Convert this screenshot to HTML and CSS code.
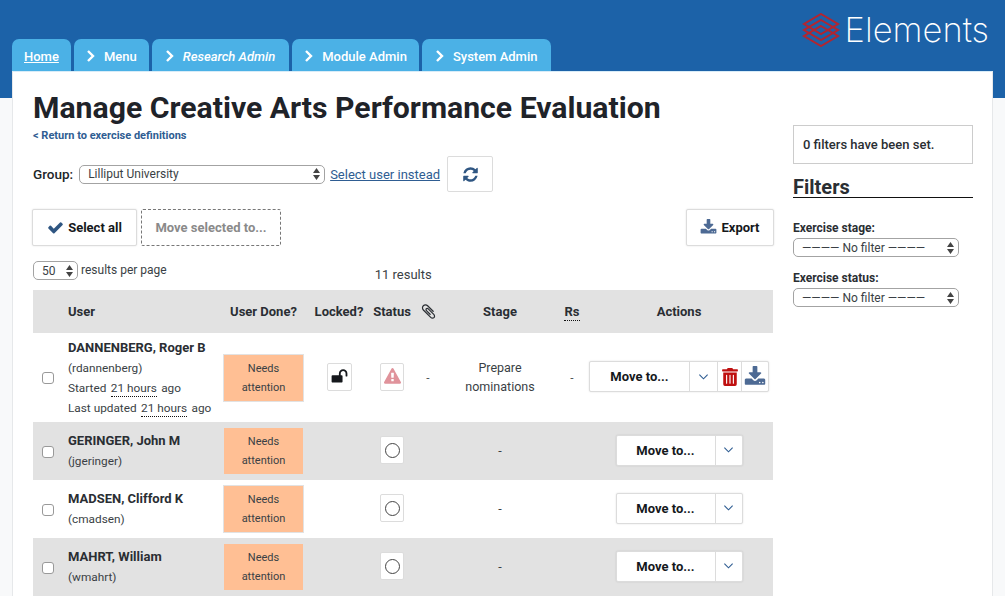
FILE: index.html
```html
<!DOCTYPE html>
<html lang="en">
<head>
<meta charset="utf-8">
<title>Manage Creative Arts Performance Evaluation</title>
<link rel="stylesheet" href="styles.css">
</head>
<body>
<header class="topbar">
  <nav class="tabs">
    <a class="tab tab-home">Home</a>
    <a class="tab"><svg class="chev" viewBox="0 0 10 14"><path d="M2 2l5 5-5 5"/></svg>Menu</a>
    <a class="tab tab-em"><svg class="chev" viewBox="0 0 10 14"><path d="M2 2l5 5-5 5"/></svg>Research Admin</a>
    <a class="tab"><svg class="chev" viewBox="0 0 10 14"><path d="M2 2l5 5-5 5"/></svg>Module Admin</a>
    <a class="tab tab-last"><svg class="chev" viewBox="0 0 10 14"><path d="M2 2l5 5-5 5"/></svg>System Admin</a>
  </nav>
  <div class="brand">
    <svg class="brand-mark" viewBox="0 0 38 34">
      <path d="M19 1L36 11 19 21 2 11z"/><path d="M19 7L36 17 19 27 2 17z"/><path d="M19 13L36 23 19 33 2 23z"/>
    </svg>
    <span class="brand-name">Elements</span>
  </div>
</header>
<main class="sheet">
  <section class="content">
    <h1 class="title">Manage Creative Arts Performance Evaluation</h1>
    <a class="back">&lt; Return to exercise definitions</a>
    <div class="group-row">
      <label class="group-label">Group:</label>
      <span class="sel sel-group"><select><option>Lilliput University</option></select><svg class="updown" viewBox="0 0 7 12"><path d="M3.5 0L7 5H0zM3.5 12L0 7h7z"/></svg></span>
      <a class="link">Select user instead</a>
      <button class="btn btn-refresh"><svg class="ico-refresh" viewBox="0 0 1792 1792"><path d="M1639 1056q0 5-1 7-64 268-268 434.5t-478 166.5q-146 0-282.5-55t-243.5-157l-129 129q-19 19-45 19t-45-19-19-45v-448q0-26 19-45t45-19h448q26 0 45 19t19 45-19 45l-137 137q71 66 161 102t187 36q134 0 250-65t186-179q11-17 53-117 8-23 30-23h192q13 0 22.5 9.5t9.5 22.5zm25-800v448q0 26-19 45t-45 19h-448q-26 0-45-19t-19-45 19-45l138-138q-148-137-349-137-134 0-250 65t-186 179q-11 17-53 117-8 23-30 23h-199q-13 0-22.5-9.5t-9.5-22.5v-7q65-268 270-434.5t480-166.5q146 0 284 55.5t245 156.5l130-129q19-19 45-19t45 19 19 45z"/></svg></button>
    </div>
    <div class="toolbar">
      <button class="btn btn-select"><svg class="ico-check" viewBox="0 0 1792 1792"><path d="M1671 566q0 40-28 68l-724 724-136 136q-28 28-68 28t-68-28l-136-136-362-362q-28-28-28-68t28-68l136-136q28-28 68-28t68 28l294 295 656-657q28-28 68-28t68 28l136 136q28 28 28 68z"/></svg>Select all</button>
      <button class="btn btn-move">Move selected to...</button>
      <button class="btn btn-export"><svg class="ico-dl" viewBox="0 0 1792 1792"><path d="M1344 1344q0-26-19-45t-45-19-45 19-19 45 19 45 45 19 45-19 19-45zm256 0q0-26-19-45t-45-19-45 19-19 45 19 45 45 19 45-19 19-45zm128-224v320q0 40-28 68t-68 28h-1472q-40 0-68-28t-28-68v-320q0-40 28-68t68-28h465l135 136q58 56 136 56t136-56l136-136h464q40 0 68 28t28 68zm-325-569q17 41-14 70l-448 448q-18 19-45 19t-45-19l-448-448q-31-29-14-70 17-39 59-39h256v-448q0-26 19-45t45-19h256q26 0 45 19t19 45v448h256q42 0 59 39z"/></svg>Export</button>
    </div>
    <div class="paging">
      <span class="sel sel-page"><select><option>50</option></select><svg class="updown" viewBox="0 0 7 12"><path d="M3.5 0L7 5H0zM3.5 12L0 7h7z"/></svg></span>
      <span class="per-page">results per page</span>
      <span class="count">11 results</span>
    </div>
    <table class="grid">
      <colgroup>
        <col class="c-check"><col class="c-user"><col class="c-done"><col class="c-lock"><col class="c-status"><col class="c-clip"><col class="c-stage"><col class="c-rs"><col class="c-actions">
      </colgroup>
      <thead>
        <tr>
          <th></th>
          <th class="left">User</th>
          <th>User Done?</th>
          <th>Locked?</th>
          <th>Status</th>
          <th><svg class="ico-clip" viewBox="0 0 1792 1792"><path d="M1596 1385q0 117-79 196t-196 79q-135 0-235-100l-777-776q-113-115-113-271 0-159 110-270t269-111q158 0 273 113l605 606q10 10 10 22 0 16-30.5 46.5t-46.5 30.5q-13 0-23-10l-606-607q-79-77-181-77-106 0-179 75t-73 181q0 105 76 181l776 777q63 63 145 63 64 0 106-42t42-106q0-82-63-145l-581-581q-26-24-60-24-29 0-48 19t-19 48q0 32 25 59l410 410q10 10 10 22 0 16-31 47t-47 31q-12 0-22-10l-410-410q-63-61-63-149 0-82 57-139t139-57q88 0 149 63l581 581q100 98 100 235z"/></svg></th>
          <th>Stage</th>
          <th><abbr class="dotted">Rs</abbr></th>
          <th>Actions</th>
        </tr>
      </thead>
      <tbody>
        <tr class="row-first">
          <td class="cell-check"><input type="checkbox" class="check"></td>
          <td class="left user"><b>DANNENBERG, Roger B</b><br>(rdannenberg)<br>Started <span class="dotted">21 hours</span> ago<br>Last updated <span class="dotted">21 hours</span> ago</td>
          <td><div class="badge">Needs<br>attention</div></td>
          <td><span class="mini mini-lock"><svg class="ico-lock" viewBox="0 0 1792 1792"><path d="M1728 576v256q0 26-19 45t-45 19h-64q-26 0-45-19t-19-45v-256q0-106-75-181t-181-75-181 75-75 181v192h96q40 0 68 28t28 68v576q0 40-28 68t-68 28h-960q-40 0-68-28t-28-68v-576q0-40 28-68t68-28h672v-192q0-185 131.5-316.5t316.5-131.5 316.5 131.5 131.5 316.5z"/></svg></span></td>
          <td><span class="mini"><svg class="ico-warn" viewBox="0 0 1792 1792"><path d="M1024 1375v-190q0-14-9.5-23.5t-22.5-9.5h-192q-13 0-22.5 9.5t-9.5 23.5v190q0 14 9.5 23.5t22.5 9.5h192q13 0 22.5-9.5t9.5-23.5zm-2-374l18-459q0-12-10-19-13-11-24-11h-220q-11 0-24 11-10 7-10 21l17 457q0 10 10 16.5t24 6.5h185q14 0 23.5-6.5t10.5-16.5zm-14-934l768 1408q35 63-2 126-17 29-46.5 46t-63.5 17h-1536q-34 0-63.5-17t-46.5-46q-37-63-2-126l768-1408q17-31 47-49t65-18 65 18 47 49z"/></svg></span></td>
          <td>-</td>
          <td class="stage">Prepare<br>nominations</td>
          <td>-</td>
          <td>
            <div class="act">
              <button class="act-main act-wide">Move to...</button>
              <button class="act-cell act-caret act-caret-wide"><svg class="caret" viewBox="0 0 12 8"><path d="M1.5 1.5L6 6l4.5-4.5"/></svg></button>
              <button class="act-cell act-ico"><svg class="ico-trash" viewBox="0 0 448 512"><path d="M32 464a48 48 0 0 0 48 48h288a48 48 0 0 0 48-48V128H32zm272-256a16 16 0 0 1 32 0v224a16 16 0 0 1-32 0zm-96 0a16 16 0 0 1 32 0v224a16 16 0 0 1-32 0zm-96 0a16 16 0 0 1 32 0v224a16 16 0 0 1-32 0zM432 32H312l-9.4-18.7A24 24 0 0 0 281.1 0H166.8a23.72 23.72 0 0 0-21.4 13.3L136 32H16A16 16 0 0 0 0 48v32a16 16 0 0 0 16 16h416a16 16 0 0 0 16-16V48a16 16 0 0 0-16-16z"/></svg></button>
              <button class="act-cell act-ico"><svg class="ico-dl-row" viewBox="0 0 1792 1792"><path d="M1344 1344q0-26-19-45t-45-19-45 19-19 45 19 45 45 19 45-19 19-45zm256 0q0-26-19-45t-45-19-45 19-19 45 19 45 45 19 45-19 19-45zm128-224v320q0 40-28 68t-68 28h-1472q-40 0-68-28t-28-68v-320q0-40 28-68t68-28h465l135 136q58 56 136 56t136-56l136-136h464q40 0 68 28t28 68zm-325-569q17 41-14 70l-448 448q-18 19-45 19t-45-19l-448-448q-31-29-14-70 17-39 59-39h256v-448q0-26 19-45t45-19h256q26 0 45 19t19 45v448h256q42 0 59 39z"/></svg></button>
            </div>
          </td>
        </tr>
        <tr class="row-alt">
          <td class="cell-check"><input type="checkbox" class="check"></td>
          <td class="left user"><b>GERINGER, John M</b><br>(jgeringer)</td>
          <td><div class="badge">Needs<br>attention</div></td>
          <td></td>
          <td><span class="mini"><i class="ring"></i></span></td>
          <td></td>
          <td class="stage">-</td>
          <td></td>
          <td><div class="act"><button class="act-main">Move to...</button><button class="act-cell act-caret"><svg class="caret" viewBox="0 0 12 8"><path d="M1.5 1.5L6 6l4.5-4.5"/></svg></button></div></td>
        </tr>
        <tr>
          <td class="cell-check"><input type="checkbox" class="check"></td>
          <td class="left user"><b>MADSEN, Clifford K</b><br>(cmadsen)</td>
          <td><div class="badge">Needs<br>attention</div></td>
          <td></td>
          <td><span class="mini"><i class="ring"></i></span></td>
          <td></td>
          <td class="stage">-</td>
          <td></td>
          <td><div class="act"><button class="act-main">Move to...</button><button class="act-cell act-caret"><svg class="caret" viewBox="0 0 12 8"><path d="M1.5 1.5L6 6l4.5-4.5"/></svg></button></div></td>
        </tr>
        <tr class="row-alt">
          <td class="cell-check"><input type="checkbox" class="check"></td>
          <td class="left user"><b>MAHRT, William</b><br>(wmahrt)</td>
          <td><div class="badge">Needs<br>attention</div></td>
          <td></td>
          <td><span class="mini"><i class="ring"></i></span></td>
          <td></td>
          <td class="stage">-</td>
          <td></td>
          <td><div class="act"><button class="act-main">Move to...</button><button class="act-cell act-caret"><svg class="caret" viewBox="0 0 12 8"><path d="M1.5 1.5L6 6l4.5-4.5"/></svg></button></div></td>
        </tr>
      </tbody>
    </table>
  </section>
  <aside class="side">
    <div class="filter-note">0 filters have been set.</div>
    <h2 class="filters-title">Filters</h2>
    <label class="filter-label">Exercise stage:</label>
    <span class="sel sel-filter"><select><option>———— No filter ————</option></select><svg class="updown" viewBox="0 0 7 12"><path d="M3.5 0L7 5H0zM3.5 12L0 7h7z"/></svg></span>
    <label class="filter-label filter-label-2">Exercise status:</label>
    <span class="sel sel-filter"><select><option>———— No filter ————</option></select><svg class="updown" viewBox="0 0 7 12"><path d="M3.5 0L7 5H0zM3.5 12L0 7h7z"/></svg></span>
  </aside>
</main>
</body>
</html>
```
FILE: styles.css
```css
* { box-sizing: border-box; }
html, body { margin: 0; height: 596px; overflow: hidden; }
body {
  font-family: Roboto, "Liberation Sans", sans-serif;
  color: #212529;
  background: linear-gradient(#1c62a8 98px, #f8f9fa 98px);
}
.topbar {
  height: 71px;
  padding: 0 16px 0 12px;
  display: flex;
  justify-content: space-between;
}
.tabs { display: flex; gap: 3px; align-items: flex-end; }
.tab {
  height: 32px;
  padding: 2px 12px 0;
  display: flex;
  align-items: center;
  background: #4bb1e6;
  color: #fff;
  font-size: 13px;
  font-weight: 500;
  border-radius: 7px 7px 0 0;
}
.tab-home { text-decoration: underline; }
.tab-em { font-style: italic; padding: 2px 14px 0 13px; }
.tab-last { padding: 2px 13px 0; }
.chev { width: 10px; height: 14px; margin-right: 8px; fill: none; stroke: #fff; stroke-width: 2.4; }
.brand { display: flex; align-items: flex-start; padding-top: 11px; gap: 5px; }
.brand-mark { width: 38px; height: 34px; margin-top: 2px; fill: none; stroke: #b3252f; stroke-width: 2; }
.brand-name { font-family: Inter, sans-serif; font-weight: 250; font-size: 34.5px; line-height: 38px; color: #fff; }

.sheet {
  margin: 0 12px;
  height: 525px;
  background: #fff;
  border-left: 1px solid #e6e8ea;
  border-right: 1px solid #e6e8ea;
  border-top: 1px solid #d8ecf8;
  padding: 0 19px 0 20px;
  display: flex;
  gap: 19px;
  overflow: hidden;
}
.content { width: 741px; flex: none; }
.side { width: 180px; flex: none; padding-top: 53px; }

.title { margin: 18px 0 0; font-size: 30.2px; line-height: 36px; font-weight: 700; color: #1f2329; white-space: nowrap; }
.back { display: block; margin-top: 3px; font-size: 11px; line-height: 14px; font-weight: 700; color: #2f5d92; }

.group-row { display: flex; align-items: center; margin-top: 13px; height: 36px; }
.group-label { font-size: 13.5px; font-weight: 500; margin-right: 6px; }
.sel { display: inline-block; position: relative; }
.sel select {
  appearance: none;
  display: block;
  width: 100%;
  height: 100%;
  background: #fff;
  border: 1px solid #a3a3a3;
  border-radius: 5px;
  font-family: Roboto, sans-serif;
  font-size: 12px;
  color: #3a3f45;
  padding: 0 0 0 8px;
}
.updown { position: absolute; right: 5px; top: 50%; margin-top: -6px; width: 7px; height: 12px; fill: #444; }
.sel-group { width: 246px; height: 19px; }
.link { margin-left: 5px; font-size: 13px; color: #2f5d92; text-decoration: underline; }
.btn {
  background: #fff;
  border: 1px solid #dcdcdc;
  border-radius: 2px;
  font-family: Roboto, sans-serif;
  font-size: 13px;
  font-weight: 700;
  color: #15181c;
  display: inline-flex;
  align-items: center;
  justify-content: center;
  padding: 0;
  box-shadow: 0 0 2px rgba(0,0,0,.12);
}
.btn-refresh { width: 46px; height: 36px; margin-left: 7px; box-shadow: none; }
.ico-refresh { width: 17px; height: 17px; fill: #2f5682; }

.toolbar { display: flex; margin-top: 17px; height: 37px; }
.btn-select { width: 105px; margin-left: -1px; }
.ico-check { width: 17px; height: 17px; fill: #2f5682; margin-right: 4px; }
.btn-move { width: 140px; margin-left: 4px; border: 1px dashed #777; color: #8a8a8a; box-shadow: none; }
.btn-export { width: 88px; margin-left: auto; }
.ico-dl { width: 17px; height: 17px; fill: #4d6a94; margin-right: 4px; }

.paging { display: flex; height: 44px; padding-top: 15px; font-size: 12px; }
.sel-page { width: 45px; height: 19px; }
.sel-page select { padding-left: 8px; }
.per-page { margin-left: 3px; line-height: 18px; color: #3a3f45; }
.count { margin-left: 208px; margin-top: 5px; line-height: 18px; font-size: 13px; color: #3a3f45; }

.grid { width: 740px; border-collapse: collapse; table-layout: fixed; font-size: 11.8px; color: #3a3f45; }
.c-check { width: 27px; } .c-user { width: 158px; } .c-done { width: 91px; } .c-lock { width: 60px; }
.c-status { width: 46px; } .c-clip { width: 26px; } .c-stage { width: 118px; } .c-rs { width: 26px; } .c-actions { width: 188px; }
.grid thead tr { height: 43px; background: #e2e2e2; }
.grid th { font-size: 13px; font-weight: 700; color: #2a2e33; text-align: center; padding: 0; white-space: nowrap; }
.grid td { text-align: center; padding: 0; vertical-align: middle; }
.grid .left { text-align: left; padding-left: 8px; }
.grid .cell-check { padding-left: 3px; }
.grid tbody tr { height: 58px; }
.grid .row-first { height: 89px; }
.row-alt { background: #e2e2e2; }
.user { line-height: 20px; white-space: nowrap; }
.user b { font-size: 13px; font-weight: 700; color: #2a2e33; }
.dotted { border-bottom: 1px dotted #111; text-decoration: none; padding-bottom: 1px; margin: 0 1.5px; }
.grid .stage { font-size: 12.5px; line-height: 19px; padding-bottom: 2px; }
.check { appearance: none; width: 12px; height: 12px; margin: 0; border: 1px solid #999; border-radius: 3px; background: #fff; display: inline-block; vertical-align: middle; }
.badge {
  width: 81px;
  height: 48px;
  margin: 0 auto;
  background: #ffbf94;
  border: 1px solid #e2e2e2;
  font-size: 11px;
  line-height: 19px;
  padding-top: 4px;
  text-align: center;
}
.mini { width: 24px; height: 28px; margin-bottom: 2px; display: inline-flex; align-items: center; justify-content: center; background: #fff; border: 1px solid #dcdcdc; border-radius: 2px; vertical-align: middle; }
.mini-lock { width: 25px; }
.ico-lock { width: 17px; height: 17px; fill: #15181c; }
.ico-warn { width: 17px; height: 17px; fill: #e0939b; }
.ring { width: 15px; height: 15px; border: 1px solid #444; border-radius: 50%; display: block; }
.ico-clip { width: 17px; height: 17px; fill: #2a2e33; vertical-align: middle; }

.act { display: inline-flex; height: 31px; margin-bottom: 2px; background: #fff; border: 1px solid #dcdcdc; border-radius: 2px; box-shadow: 0 0 2px rgba(0,0,0,.12); vertical-align: middle; }
.act button { background: none; border: 0; padding: 0; font-family: Roboto, sans-serif; display: flex; align-items: center; justify-content: center; }
.act-main { width: 98px; font-size: 13px; font-weight: 700; color: #15181c; }
.act button.act-wide { width: 99px; }
.act button.act-cell { border-left: 1px solid #dcdcdc; }
.act-caret { width: 27px; }
.act button.act-caret-wide { width: 28px; }
.act-ico { width: 24px; }
.act-ico:last-child { width: 27px; }
.caret { width: 11px; height: 8px; fill: none; stroke: #2f5d92; stroke-width: 1.2; }
.ico-trash { width: 16px; height: 18px; fill: #bf1010; }
.ico-dl-row { width: 22px; height: 22px; fill: #4d6a94; }

.filter-note { height: 39px; border: 1px solid #ccc; font-size: 13px; font-weight: 500; line-height: 37px; padding-left: 9px; color: #2a2e33; }
.filters-title { margin: 13px 0 0; height: 21px; font-size: 20px; line-height: 20px; font-weight: 700; color: #2a2e33; border-bottom: 1px solid #111; }
.filter-label { display: block; margin: 22px 0 2px; font-size: 12px; line-height: 16px; font-weight: 700; color: #2a2e33; }
.filter-label-2 { margin-top: 13px; }
.sel-filter { display: block; width: 166px; height: 19px; }
.sel-filter select { font-size: 12px; padding-left: 8px; }
```
